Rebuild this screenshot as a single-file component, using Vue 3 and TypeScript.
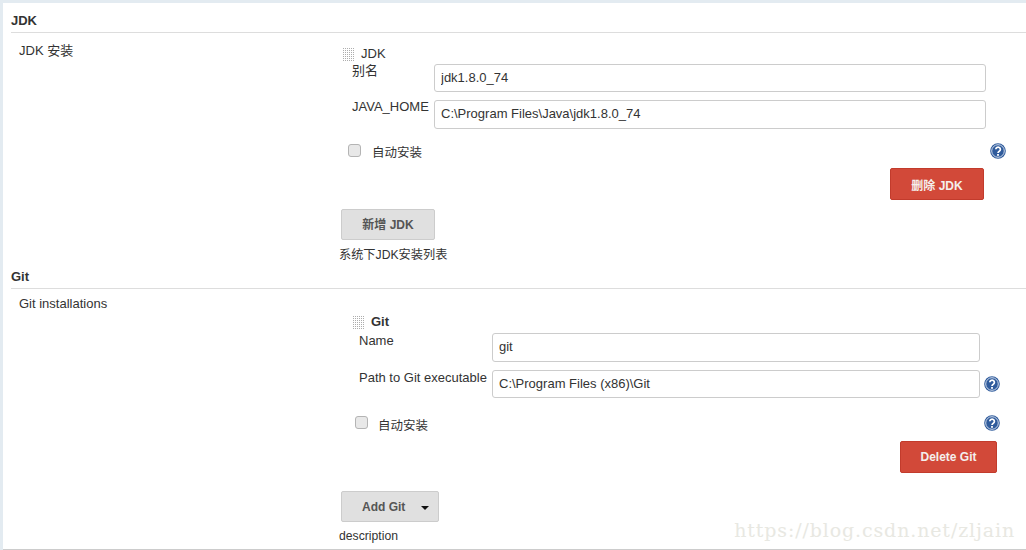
<script setup lang="ts">
interface Field { label: string; value: string; help?: boolean }
const jdkFields: Field[] = [
  { label: '别名', value: 'jdk1.8.0_74' },
  { label: 'JAVA_HOME', value: 'C:\\Program Files\\Java\\jdk1.8.0_74' },
]
const gitFields: Field[] = [
  { label: 'Name', value: 'git' },
  { label: 'Path to Git executable', value: 'C:\\Program Files (x86)\\Git', help: true },
]
</script>

<template>
  <div class="page">
    <main class="sheet">
      <section class="jdk">
        <h2 class="title">JDK</h2>
        <div class="body">
          <div class="side">JDK 安装</div>
          <div class="content">
            <div class="handle-row"><i class="grip"></i><span>JDK</span></div>
            <div v-for="f in jdkFields" :key="f.label" class="field">
              <label>{{ f.label }}</label>
              <input :value="f.value" readonly />
            </div>
            <div class="auto">
              <span class="check"></span><span class="auto-text">自动安装</span>
              <svg class="help" viewBox="0 0 16 16"><circle cx="8" cy="8" r="7.8" fill="#2f5b9c" /><circle cx="8" cy="8" r="6.3" fill="none" stroke="#dfe7f2" stroke-width=".9" /><path d="M5.8 6.3a2.3 2.2 0 1 1 3.5 1.9c-.9.6-1.3.9-1.3 1.9" fill="none" stroke="#fff" stroke-width="1.7" /><rect x="7.1" y="11" width="1.8" height="1.8" fill="#fff" /></svg>
            </div>
            <div class="del-row"><button class="red">删除 JDK</button></div>
            <button class="grey">新增 JDK</button>
            <p class="desc">系统下JDK安装列表</p>
          </div>
        </div>
      </section>

      <section class="git">
        <h2 class="title">Git</h2>
        <div class="body">
          <div class="side">Git installations</div>
          <div class="content">
            <div class="handle-row"><i class="grip"></i><b>Git</b></div>
            <div v-for="f in gitFields" :key="f.label" class="field">
              <label>{{ f.label }}</label>
              <input :value="f.value" readonly />
              <svg v-if="f.help" class="help" viewBox="0 0 16 16"><circle cx="8" cy="8" r="7.8" fill="#2f5b9c" /><circle cx="8" cy="8" r="6.3" fill="none" stroke="#dfe7f2" stroke-width=".9" /><path d="M5.8 6.3a2.3 2.2 0 1 1 3.5 1.9c-.9.6-1.3.9-1.3 1.9" fill="none" stroke="#fff" stroke-width="1.7" /><rect x="7.1" y="11" width="1.8" height="1.8" fill="#fff" /></svg>
            </div>
            <div class="auto">
              <span class="check"></span><span class="auto-text">自动安装</span>
              <svg class="help" viewBox="0 0 16 16"><circle cx="8" cy="8" r="7.8" fill="#2f5b9c" /><circle cx="8" cy="8" r="6.3" fill="none" stroke="#dfe7f2" stroke-width=".9" /><path d="M5.8 6.3a2.3 2.2 0 1 1 3.5 1.9c-.9.6-1.3.9-1.3 1.9" fill="none" stroke="#fff" stroke-width="1.7" /><rect x="7.1" y="11" width="1.8" height="1.8" fill="#fff" /></svg>
            </div>
            <div class="del-row"><button class="red">Delete Git</button></div>
            <button class="grey add"><span>Add Git</span><i class="caret"></i></button>
            <p class="desc">description</p>
          </div>
        </div>
      </section>
      <div class="mark">https://blog.csdn.net/zljain</div>
    </main>
  </div>
</template>

<style>
html, body { margin: 0; background: #fff; }
</style>

<style scoped>
.page {
  width: 1026px;
  height: 550px;
  overflow: hidden;
  background: #e3ebf1;
  padding: 3px 0 0 3px;
  box-sizing: border-box;
  font: 13px/16px "Liberation Sans", "Noto Sans CJK SC", sans-serif;
  color: #333;
}
.sheet {
  position: relative;
  background: #fff;
  height: 547px;
  padding-left: 8px;
  border-bottom: 1px solid #ccc;
  box-sizing: border-box;
}
.title {
  margin: 0;
  font-size: 13px;
  line-height: 16px;
  font-weight: 700;
  color: #333;
  padding-bottom: 3px;
  border-bottom: 1px solid #ddd;
}
.jdk .title { padding-top: 10px; }
.body { display: flex; }
.side { width: 322px; flex: none; padding: 10px 0 0 8px; box-sizing: border-box; height: 26px; }
.git .side { padding-top: 7px; }
.content { flex: 1; }
.handle-row { display: flex; align-items: center; height: 16px; }
.grip {
  width: 13px;
  height: 14px;
  margin-right: 6px;
  background-color: #adadad;
  background-image:
    linear-gradient(to right, #fff 50%, transparent 50%),
    linear-gradient(to bottom, #fff 50%, transparent 50%);
  background-size: 2px 2px;
}
.field { display: flex; align-items: flex-start; }
.field label { flex: none; display: block; margin-top: -1px; box-sizing: border-box; white-space: nowrap; }
input {
  display: block;
  box-sizing: border-box;
  border: 1px solid #ccc;
  border-radius: 3px;
  padding: 0 6px 2px;
  margin: 0;
  font: 13px "Liberation Sans", sans-serif;
  color: #333;
  background: #fff;
  outline: none;
}
.auto { display: flex; align-items: center; position: relative; height: 16px; }
.check {
  width: 11px;
  height: 11px;
  border: 1px solid #b4b4b4;
  border-radius: 3px;
  background: #e8e8e8;
  flex: none;
  position: relative;
  top: -1px;
}
.auto-text { font-size: 12.5px; position: relative; top: 2px; }
.help { width: 16px; height: 16px; flex: none; }
.auto .help { position: absolute; top: 0; }
.del-row { display: flex; justify-content: flex-end; }
button {
  box-sizing: border-box;
  font: 700 12px "Liberation Sans", "Noto Sans CJK SC", sans-serif;
  border-radius: 2px;
  padding: 0;
  display: block;
}
.red { background: #d24939; border: 1px solid #c23b2c; color: #f4efec; height: 32px; }
.grey { background: #e0e0e0; border: 1px solid #ccc; color: #555; height: 31px; width: 94px; }
.desc { margin: 0; font-size: 12.2px; line-height: 16px; }

.jdk { height: 266px; }
.jdk .content { padding: 13px 0 0 8px; }
.jdk .handle-row { margin-left: 1px; }
.jdk .field { margin-top: 2px; height: 28px; }
.jdk .field + .field { margin-top: 8px; height: 29px; }
.jdk .field label { width: 93px; padding-left: 11px; }
.jdk input { width: 552px; height: 100%; }
.jdk .auto { margin: 14px 0 0 7px; }
.jdk .auto-text { margin-left: 11px; }
.jdk .auto .help { left: 642px; }
.jdk .del-row { width: 643px; margin-top: 9px; }
.jdk .red { width: 94px; }
.jdk .grey { margin-top: 9px; padding-bottom: 2px; }
.jdk .desc { margin: 7px 0 0 -2px; }

.git .content { padding: 25px 0 0 18px; }
.git .handle-row { margin-left: 1px; }
.git .field { margin-top: 3px; height: 29px; }
.git .field + .field { margin-top: 8px; height: 28px; }
.git .field label { width: 141px; padding-left: 8px; margin-top: 0; }
.git input { width: 488px; height: 100%; }
.git .field .help { margin: 6px 0 0 4px; }
.git .auto { margin: 17px 0 0 4px; }
.git .auto-text { margin-left: 10px; top: 3px; }
.git .auto .help { left: 629px; }
.git .del-row { width: 646px; margin-top: 10px; }
.git .red { width: 97px; }
.git .grey { margin: 18px 0 0 -10px; width: 98px; position: relative; }
.add { display: flex; align-items: center; padding-left: 20px; }
.caret {
  position: absolute;
  right: 9px;
  top: 14px;
  width: 0;
  height: 0;
  border: 4px solid transparent;
  border-top-color: #111;
  border-bottom: 0;
}
.git .desc { margin: 6px 0 0 -12px; }
.mark {
  position: absolute;
  right: 11px;
  top: 516px;
  font: 19px/22px "DejaVu Serif", "Liberation Serif", serif;
  color: #e8e8e2;
  letter-spacing: 0.87px;
}
</style>
